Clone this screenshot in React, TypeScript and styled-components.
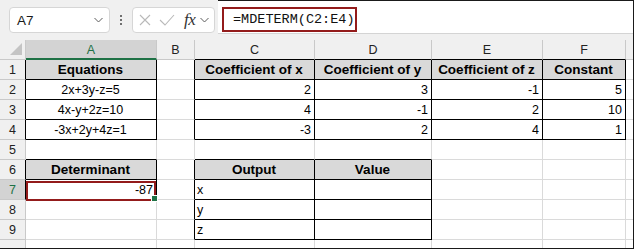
import React from "react";
import styled, { createGlobalStyle } from "styled-components";

type Align = "left" | "center" | "right";
type CellData = { v: string; align?: Align; head?: boolean };

const COLS = ["A", "B", "C", "D", "E", "F", "G"];
const COL_WIDTHS = [131, 38, 120, 117, 111, 83, 7];
const ROWS = [1, 2, 3, 4, 5, 6, 7, 8, 9, 10];

const SELECTED = { col: 0, row: 7 };

// bordered ranges (col index from A = 0)
const boxes = [
  { c0: 0, c1: 0, r0: 1, r1: 4 },
  { c0: 2, c1: 5, r0: 1, r1: 4 },
  { c0: 0, c1: 0, r0: 6, r1: 7 },
  { c0: 2, c1: 3, r0: 6, r1: 9 },
];

const cells: Record<string, CellData> = {
  A1: { v: "Equations", head: true },
  C1: { v: "Coefficient of x", head: true },
  D1: { v: "Coefficient of y", head: true },
  E1: { v: "Coefficient of z", head: true },
  F1: { v: "Constant", head: true },
  A2: { v: "2x+3y-z=5", align: "center" },
  C2: { v: "2" },
  D2: { v: "3" },
  E2: { v: "-1" },
  F2: { v: "5" },
  A3: { v: "4x-y+2z=10", align: "center" },
  C3: { v: "4" },
  D3: { v: "-1" },
  E3: { v: "2" },
  F3: { v: "10" },
  A4: { v: "-3x+2y+4z=1", align: "center" },
  C4: { v: "-3" },
  D4: { v: "2" },
  E4: { v: "4" },
  F4: { v: "1" },
  A6: { v: "Determinant", head: true },
  C6: { v: "Output", head: true },
  D6: { v: "Value", head: true },
  A7: { v: "-87" },
  C7: { v: "x", align: "left" },
  C8: { v: "y", align: "left" },
  C9: { v: "z", align: "left" },
};

const boxed = (r: number, c: number) =>
  boxes.some((b) => r >= b.r0 && r <= b.r1 && c >= b.c0 && c <= b.c1);

const GRID = "#dadada";
const HEAD_LINE = "#c9c9c9";
const INK = "#000";

export default function App() {
  return (
    <>
      <GlobalStyle />
      <Frame>
        <Toolbar>
          <NameBox>
            <span>A7</span>
            <Chevron />
          </NameBox>
          <Dots>
            <i />
            <i />
            <i />
          </Dots>
          <FxBox>
            <svg width="12" height="12" viewBox="0 0 12 12">
              <path d="M1 1 L11 11 M11 1 L1 11" stroke="#b9b9b9" strokeWidth="1.1" fill="none" />
            </svg>
            <svg width="16" height="12" viewBox="0 0 16 12">
              <path d="M1 6 L6 11 L15 1" stroke="#b9b9b9" strokeWidth="1.1" fill="none" />
            </svg>
            <FxLabel>fx</FxLabel>
            <Chevron />
          </FxBox>
          <FormulaArea>
            <FormulaBox>=MDETERM(C2:E4)</FormulaBox>
          </FormulaArea>
        </Toolbar>

        <Sheet>
          <Corner>
            <svg width="13" height="13" viewBox="0 0 13 13">
              <path d="M12 0 L12 12 L0 12 Z" fill="#c4c4c4" />
            </svg>
          </Corner>
          {COLS.map((col, c) => (
            <ColHead
              key={col}
              $selected={c === SELECTED.col}
              $last={c === COLS.length - 1}
              $under={boxed(1, c)}
            >
              {c < COLS.length - 1 ? col : ""}
            </ColHead>
          ))}

          {ROWS.map((r) => (
            <React.Fragment key={r}>
              <RowHead $selected={r === SELECTED.row} $edge={boxed(r, 0)} $last={r === ROWS.length}>
                {r < ROWS.length ? r : ""}
              </RowHead>
              {COLS.map((col, c) => {
                const cell = cells[`${col}${r}`];
                const isSel = r === SELECTED.row && c === SELECTED.col;
                return (
                  <Cell
                    key={col}
                    $right={boxed(r, c) || boxed(r, c + 1)}
                    $bottom={boxed(r, c) || boxed(r + 1, c)}
                    $head={!!cell?.head}
                    $align={cell?.head ? "center" : cell?.align ?? "right"}
                    $lastCol={c === COLS.length - 1}
                    $lastRow={r === ROWS.length}
                  >
                    {cell && <CellText $bold={!!cell.head}>{cell.v}</CellText>}
                    {isSel && (
                      <Selection>
                        <FillHandle />
                      </Selection>
                    )}
                  </Cell>
                );
              })}
            </React.Fragment>
          ))}
        </Sheet>
      </Frame>
    </>
  );
}

function Chevron() {
  return (
    <svg width="9" height="6" viewBox="0 0 9 6">
      <path d="M0.5 1 L4.5 5 L8.5 1" stroke="#5c5c5c" strokeWidth="1" fill="none" />
    </svg>
  );
}

const GlobalStyle = createGlobalStyle`
  * { box-sizing: border-box; }
  body {
    margin: 0;
    background: #fff;
    font-family: "Liberation Sans", Arial, sans-serif;
  }
`;

const Frame = styled.div`
  width: 634px;
  height: 249px;
  background: #f0f0f0;
  border-right: 1px solid #1a1a1a;
  border-bottom: 1px solid #1a1a1a;
  overflow: hidden;
`;

const Toolbar = styled.div`
  height: 40px;
  display: flex;
  align-items: flex-start;
`;

const NameBox = styled.div`
  margin: 7px 0 0 9px;
  width: 101px;
  height: 26px;
  background: #fff;
  border: 1px solid #d6d6d6;
  border-radius: 4px;
  display: flex;
  align-items: center;
  justify-content: space-between;
  padding: 0 6px 0 7px;
  font-size: 13.5px;
  color: #1a1a1a;
`;

const Dots = styled.div`
  width: 22px;
  height: 40px;
  display: flex;
  flex-direction: column;
  align-items: center;
  justify-content: center;
  gap: 2px;
  & i {
    width: 2px;
    height: 2px;
    background: #444;
    border-radius: 1px;
  }
`;

const FxBox = styled.div`
  margin-top: 7px;
  width: 83px;
  height: 26px;
  background: #fff;
  border: 1px solid #d6d6d6;
  border-radius: 4px;
  display: flex;
  align-items: center;
  gap: 8px;
  padding: 0 3px 0 6px;
  & svg:last-child {
    margin-left: -3px;
  }
`;

const FxLabel = styled.span`
  font-family: "Liberation Serif", "Times New Roman", serif;
  font-style: italic;
  font-size: 17px;
  color: #333;
  letter-spacing: -0.5px;
  margin-left: 1px;
`;

const FormulaArea = styled.div`
  flex: 1;
  margin-left: 3px;
  height: 34px;
  background: #fff;
  border-top: 1px solid #1a1a1a;
  border-bottom: 1px solid #d4d4d4;
  padding: 6px 0 0 4px;
`;

const FormulaBox = styled.div`
  width: 135px;
  height: 25px;
  border: 2px solid #931b1b;
  padding-left: 9px;
  display: flex;
  align-items: center;
  font-family: "Liberation Mono", "Courier New", monospace;
  font-size: 13.5px;
  color: #111;
  white-space: nowrap;
`;

const Sheet = styled.div`
  display: grid;
  grid-template-columns: 26px ${COL_WIDTHS.map((w) => `${w}px`).join(" ")};
  grid-template-rows: 20px repeat(9, 20px) 8px;
  background: #fff;
`;

const Corner = styled.div`
  background: #f0f0f0;
  border-right: 1px solid ${HEAD_LINE};
  border-bottom: 1px solid ${HEAD_LINE};
  display: flex;
  align-items: flex-end;
  justify-content: flex-end;
  padding: 0 2px 3px 0;
`;

const ColHead = styled.div<{ $selected: boolean; $last: boolean; $under: boolean }>`
  background: ${(p) => (p.$selected ? "#d3d3d3" : "#f0f0f0")};
  border-right: ${(p) => (p.$last ? "none" : `1px solid ${HEAD_LINE}`)};
  border-bottom: ${(p) =>
    p.$selected ? "2px solid #1e7145" : `1px solid ${p.$under ? INK : HEAD_LINE}`};
  color: ${(p) => (p.$selected ? "#1e7145" : "#222")};
  font-size: 12.5px;
  display: flex;
  align-items: center;
  justify-content: center;
  padding-top: 1px;
`;

const RowHead = styled.div<{ $selected: boolean; $edge: boolean; $last: boolean }>`
  background: ${(p) => (p.$selected ? "#d3d3d3" : "#f0f0f0")};
  border-right: 1px solid ${(p) => (p.$edge ? INK : HEAD_LINE)};
  border-bottom: ${(p) => (p.$last ? "none" : `1px solid ${HEAD_LINE}`)};
  color: ${(p) => (p.$selected ? "#1e7145" : "#222")};
  font-size: 12.5px;
  display: flex;
  align-items: center;
  justify-content: center;
`;

const Cell = styled.div<{
  $right: boolean;
  $bottom: boolean;
  $head: boolean;
  $align: Align;
  $lastCol: boolean;
  $lastRow: boolean;
}>`
  position: relative;
  background: ${(p) => (p.$head ? "#d9d9d9" : "#fff")};
  border-right: 1px solid ${(p) => (p.$right ? INK : GRID)};
  border-bottom: ${(p) => (p.$lastRow ? "none" : `1px solid ${p.$bottom ? INK : GRID}`)};
  display: flex;
  align-items: flex-end;
  justify-content: ${(p) =>
    p.$align === "left" ? "flex-start" : p.$align === "center" ? "center" : "flex-end"};
  padding: 0 3px 1px 2px;
  white-space: nowrap;
  ${(p) => p.$lastCol && "border-right: none;"}
`;

const CellText = styled.span<{ $bold: boolean }>`
  font-size: ${(p) => (p.$bold ? "13.5px" : "12.5px")};
  font-weight: ${(p) => (p.$bold ? 700 : 400)};
  line-height: ${(p) => (p.$bold ? "16px" : "15px")};
  color: #000;
`;

const Selection = styled.div`
  position: absolute;
  top: 1px;
  left: 0;
  right: 0;
  bottom: -2px;
  border: 2px solid #931b1b;
  z-index: 2;
`;

const FillHandle = styled.div`
  position: absolute;
  right: -3px;
  bottom: -2px;
  width: 5px;
  height: 5px;
  background: #1e7145;
  box-shadow: 0 0 0 1px #fff;
`;
